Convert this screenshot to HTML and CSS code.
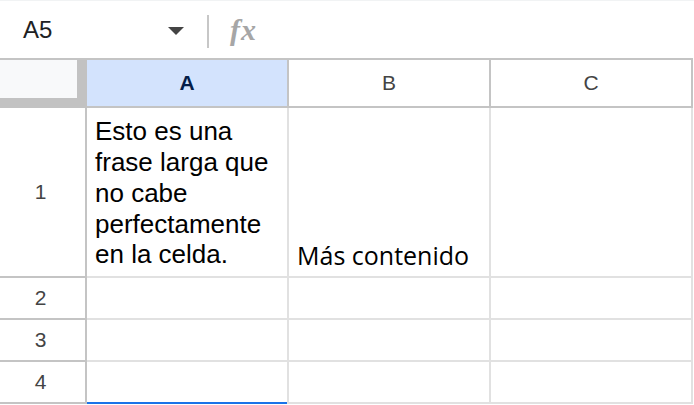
FILE: index.html
```html
<!DOCTYPE html>
<html lang="es">
<head>
  <meta charset="UTF-8" />
  <title>Hoja de cálculo</title>
  <link rel="stylesheet" href="styles.css">
</head>
<body>
  <div class="formula-bar">
    <div class="name-box">
      <span class="ref">A5</span>
      <span class="caret"></span>
    </div>
    <div class="divider"></div>
    <span class="fx">fx</span>
  </div>

  <div class="sheet">
    <div class="corner"><div class="corner-fill"></div></div>
    <div class="col-head selected">A</div>
    <div class="col-head">B</div>
    <div class="col-head">C</div>

    <div class="row-head">1</div>
    <div class="cell wrap">Esto es una frase larga que no cabe perfectamente en la celda.</div>
    <div class="cell alt">Más contenido</div>
    <div class="cell"></div>

    <div class="row-head">2</div>
    <div class="cell"></div>
    <div class="cell"></div>
    <div class="cell"></div>

    <div class="row-head">3</div>
    <div class="cell"></div>
    <div class="cell"></div>
    <div class="cell"></div>

    <div class="row-head">4</div>
    <div class="cell above-active"><div class="selection"></div></div>
    <div class="cell"></div>
    <div class="cell"></div>
  </div>
</body>
</html>
```

FILE: styles.css
```css
body {
  margin: 0;
  font-family: "Liberation Sans", Arial, sans-serif;
  background: #fff;
  color: #000;
  overflow: hidden;
}
.formula-bar {
  display: flex;
  align-items: center;
  height: 57px;
  border-top: 1px solid #f1f3f4;
}
.name-box {
  display: flex;
  align-items: center;
  justify-content: space-between;
  box-sizing: border-box;
  width: 184px;
  padding-left: 23px;
}
.ref {
  font-size: 24px;
  color: #202124;
}
.caret {
  width: 0;
  height: 0;
  border-left: 8px solid transparent;
  border-right: 8px solid transparent;
  border-top: 8px solid #444;
  margin-top: 2px;
}
.divider {
  width: 2px;
  height: 33px;
  margin-left: 23px;
  margin-top: 3px;
  background: #c7c7c7;
}
.fx {
  margin-left: 21px;
  font-family: "Liberation Serif", serif;
  font-style: italic;
  font-weight: bold;
  font-size: 30px;
  letter-spacing: 1px;
  color: #a6a6a6;
}
.sheet {
  display: grid;
  grid-template-columns: 87px 202px 202px 202px;
  grid-template-rows: 48px 170px 42px 42px 42px;
  width: 693px;
  border-top: 2px solid #c4c4c4;
}
.corner {
  background: #c2c2c2;
}
.corner-fill {
  width: 77px;
  height: 38px;
  background: #f8f9fa;
}
.col-head, .row-head {
  display: flex;
  align-items: center;
  justify-content: center;
  border-right: 2px solid #c4c4c4;
  border-bottom: 2px solid #c4c4c4;
  font-size: 21px;
  color: #444;
}
.row-head {
  padding-right: 4px;
}
.col-head.selected {
  background: #d3e3fd;
  color: #041e49;
  font-weight: bold;
}
.cell {
  display: flex;
  flex-direction: column;
  justify-content: flex-end;
  box-sizing: border-box;
  padding: 0 8px 6px;
  border-right: 2px solid #e1e1e1;
  border-bottom: 2px solid #e1e1e1;
}
.wrap {
  font-size: 26px;
  line-height: 30.7px;
}
.alt {
  font-family: "Open Sans", sans-serif;
  font-size: 25px;
  line-height: 30px;
}
.above-active {
  position: relative;
}
/* top edge of the A5 selection, drawn over the grid line */
.selection {
  position: absolute;
  bottom: -3px;
  left: 0;
  right: 0;
  height: 3px;
  background: #1a73e8;
}
```
